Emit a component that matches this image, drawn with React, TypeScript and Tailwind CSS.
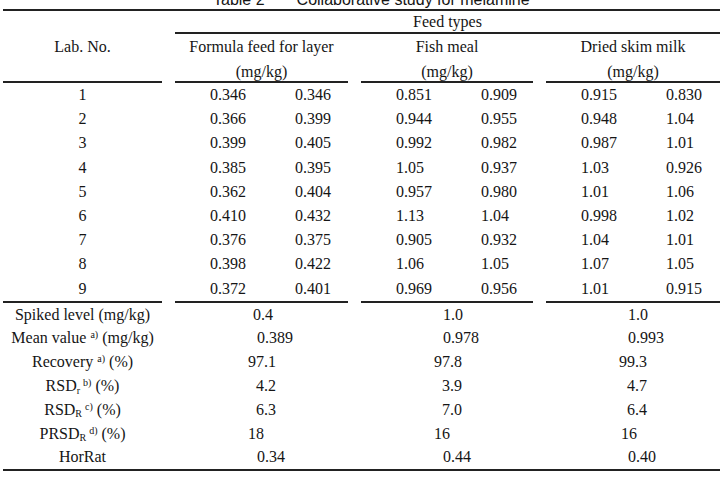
const rows = [
  ["1", "0.346", "0.346", "0.851", "0.909", "0.915", "0.830"],
  ["2", "0.366", "0.399", "0.944", "0.955", "0.948", "1.04"],
  ["3", "0.399", "0.405", "0.992", "0.982", "0.987", "1.01"],
  ["4", "0.385", "0.395", "1.05", "0.937", "1.03", "0.926"],
  ["5", "0.362", "0.404", "0.957", "0.980", "1.01", "1.06"],
  ["6", "0.410", "0.432", "1.13", "1.04", "0.998", "1.02"],
  ["7", "0.376", "0.375", "0.905", "0.932", "1.04", "1.01"],
  ["8", "0.398", "0.422", "1.06", "1.05", "1.07", "1.05"],
  ["9", "0.372", "0.401", "0.969", "0.956", "1.01", "0.915"],
];

// value + left offset class for each feed column
const summary: { label: React.ReactNode; values: [string, string][] }[] = [
  {
    label: "Spiked level (mg/kg)",
    values: [["0.4", "pl-[78px]"], ["1.0", "pl-[82px]"], ["1.0", "pl-[82px]"]],
  },
  {
    label: (
      <>
        Mean value <sup className="text-[10px]">a)</sup> (mg/kg)
      </>
    ),
    values: [["0.389", "pl-[82px]"], ["0.978", "pl-[82px]"], ["0.993", "pl-[82px]"]],
  },
  {
    label: (
      <>
        Recovery <sup className="text-[10px]">a)</sup> (%)
      </>
    ),
    values: [["97.1", "pl-[73px]"], ["97.8", "pl-[73px]"], ["99.3", "pl-[73px]"]],
  },
  {
    label: (
      <>
        RSD<sub className="text-[10px]">r</sub>
        <sup className="ml-[3px] text-[10px]">b)</sup> (%)
      </>
    ),
    values: [["4.2", "pl-[81px]"], ["3.9", "pl-[81px]"], ["4.7", "pl-[81px]"]],
  },
  {
    label: (
      <>
        RSD<sub className="text-[10px]">R</sub>
        <sup className="ml-[3px] text-[10px]">c)</sup> (%)
      </>
    ),
    values: [["6.3", "pl-[81px]"], ["7.0", "pl-[81px]"], ["6.4", "pl-[81px]"]],
  },
  {
    label: (
      <>
        PRSD<sub className="text-[10px]">R</sub>
        <sup className="ml-[3px] text-[10px]">d)</sup> (%)
      </>
    ),
    values: [["18", "pl-[73px]"], ["16", "pl-[73px]"], ["16", "pl-[75px]"]],
  },
  {
    label: "HorRat",
    values: [["0.34", "pl-[82px]"], ["0.44", "pl-[82px]"], ["0.40", "pl-[82px]"]],
  },
];

const cols = "grid grid-cols-[159px_173px_172px_174px] gap-x-[13px]";

export default function App() {
  return (
    <div className="h-[478px] w-[722px] overflow-hidden bg-white font-['Liberation_Serif',serif] text-[16px] text-[#151515]">
      {/* title, clipped at the top edge */}
      <div className="h-[9px] overflow-hidden">
        <div className="-mt-[8px] flex pl-[213px] font-['Liberation_Sans',Arial,sans-serif] leading-[16px]">
          <span>Table 2</span>
          <span className="ml-[32px]">Collaborative study for melamine</span>
        </div>
      </div>

      <div className="ml-[3px] w-[717px] border-t-2 border-[#222]">
        {/* header */}
        <div className={cols}>
          <div className="row-span-2 border-b-2 border-[#222] pt-[23px] text-center leading-[25px]">
            Lab. No.
          </div>
          <div className="col-span-3 h-[23px] border-b-2 border-[#222] text-center leading-[21px]">
            Feed types
          </div>
          <div className="h-[49px] border-b-2 border-[#222] text-center leading-[25px]">
            <div>Formula feed for layer</div>
            <div>(mg/kg)</div>
          </div>
          <div className="h-[49px] border-b-2 border-[#222] text-center leading-[25px]">
            <div>Fish meal</div>
            <div>(mg/kg)</div>
          </div>
          <div className="h-[49px] border-b-2 border-[#222] text-center leading-[25px]">
            <div>Dried skim milk</div>
            <div>(mg/kg)</div>
          </div>
        </div>

        {/* lab results */}
        <div className="flex gap-x-[13px]">
          <div className="w-[159px] border-b-2 border-[#222]">
            {rows.map((r) => (
              <div key={r[0]} className="h-[24.2px] text-center leading-[24.2px]">
                {r[0]}
              </div>
            ))}
          </div>
          {[
            [1, "w-[173px]"],
            [3, "w-[172px]"],
            [5, "w-[174px]"],
          ].map(([i, w]) => (
            <div key={i} className={`${w} border-b-2 border-[#222]`}>
              {rows.map((r) => (
                <div key={r[0]} className="flex h-[24.2px] pl-[35px] leading-[24.2px]">
                  <span className="w-[85px]">{r[i as number]}</span>
                  <span>{r[(i as number) + 1]}</span>
                </div>
              ))}
            </div>
          ))}
        </div>

        {/* statistics */}
        <div className="border-b-2 border-[#222]">
          {summary.map((s, k) => (
            <div key={k} className={`${cols} h-[23.8px] leading-[23.8px]`}>
              <div className="whitespace-nowrap text-center">{s.label}</div>
              {s.values.map(([v, pl], j) => (
                <div key={j} className={pl}>
                  {v}
                </div>
              ))}
            </div>
          ))}
        </div>
      </div>
    </div>
  );
}
